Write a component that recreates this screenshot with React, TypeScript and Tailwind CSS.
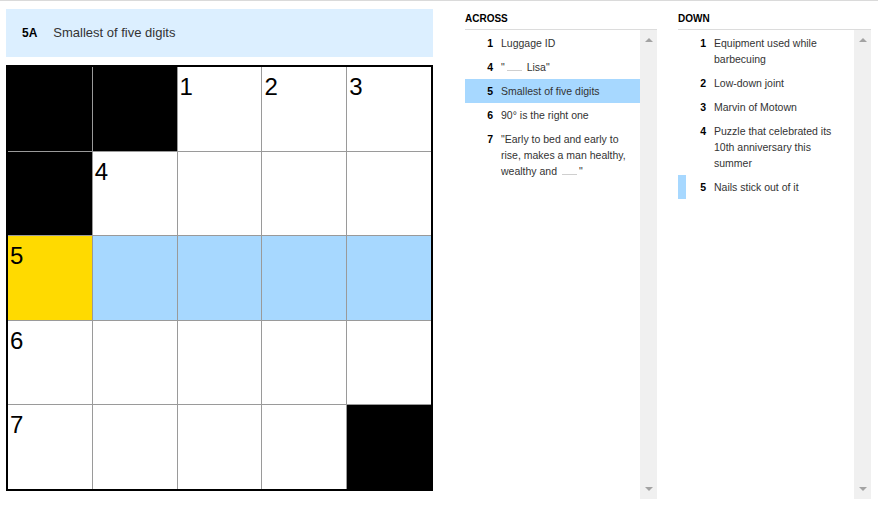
import React from "react";

type Cell = { black?: boolean; num?: number };

const grid: Cell[] = [
	{ black: true }, { black: true }, { num: 1 }, { num: 2 }, { num: 3 },
	{ black: true }, { num: 4 }, {}, {}, {},
	{ num: 5 }, {}, {}, {}, {},
	{ num: 6 }, {}, {}, {}, {},
	{ num: 7 }, {}, {}, {}, { black: true },
];

const Blank = () => (
	<span className="inline-block w-[15px] h-px bg-[#cfcfcf] mx-[2px]" />
);

const across: { n: number; text: React.ReactNode; active?: boolean }[] = [
	{ n: 1, text: "Luggage ID" },
	{ n: 4, text: <>"<Blank /> Lisa"</> },
	{ n: 5, text: "Smallest of five digits", active: true },
	{ n: 6, text: "90° is the right one" },
	{ n: 7, text: <>"Early to bed and early to rise, makes a man healthy, wealthy and <Blank />"</> },
];

const down: { n: number; text: React.ReactNode; related?: boolean }[] = [
	{ n: 1, text: "Equipment used while barbecuing" },
	{ n: 2, text: "Low-down joint" },
	{ n: 3, text: "Marvin of Motown" },
	{ n: 4, text: "Puzzle that celebrated its 10th anniversary this summer" },
	{ n: 5, text: "Nails stick out of it", related: true },
];

const Scrollbar = () => (
	<div className="w-[17px] bg-[#f0f0f0] flex flex-col items-center justify-between pt-[8px] pb-[8px]">
		<div className="w-0 h-0 border-l-[4px] border-r-[4px] border-b-[4px] border-l-transparent border-r-transparent border-b-[#a3a3a3]" />
		<div className="w-0 h-0 border-l-[4px] border-r-[4px] border-t-[4px] border-l-transparent border-r-transparent border-t-[#a3a3a3]" />
	</div>
);

const ClueList = ({
	title,
	items,
}: {
	title: string;
	items: { n: number; text: React.ReactNode; active?: boolean; related?: boolean }[];
}) => {
	return (
		<div className="flex flex-col">
			<div className="h-[29px] pt-[12px] text-[10px] leading-[12px] font-bold text-black border-b border-[#dcdcdc]">
				{title}
			</div>
			<div className="flex h-[469px]">
				<div className="flex-1 pt-[1px]">
					{items.map((c) => (
						<div
							key={c.n}
							className={`flex py-[4px] pr-[10px] border-l-[8px] text-[10.5px] leading-[16px] ${
								c.active ? "bg-[#a7d8ff] border-l-transparent" : c.related ? "border-l-[#a7d8ff]" : "border-l-transparent"
							}`}
						>
							<span className="w-[20px] shrink-0 text-right font-bold text-black">{c.n}</span>
							<span className="ml-[8px] text-[#333]">{c.text}</span>
						</div>
					))}
				</div>
				<Scrollbar />
			</div>
		</div>
	);
};

const App = () => {
	return (
		<div className="w-[878px] h-[505px] bg-white border-t border-[#dadada] flex overflow-hidden font-['Liberation_Sans',Arial,sans-serif]">
			<div className="ml-[6px] mt-[8px] w-[427px] flex flex-col">
				<div className="h-[48px] bg-[#dcefff] flex items-center pl-[16px]">
					<span className="text-[12px] font-bold text-black">5A</span>
					<span className="ml-[16px] text-[13px] text-[#333]">Smallest of five digits</span>
				</div>
				<div className="mt-[8px] w-[427px] h-[426px] border-2 border-black bg-[#9a9a9a] grid grid-cols-5 grid-rows-5 gap-px">
					{grid.map((cell, i) => {
						const row = Math.floor(i / 5);
						let bg = "bg-white";
						if (cell.black) bg = "bg-black";
						else if (i === 10) bg = "bg-[#ffda00]";
						else if (row === 2) bg = "bg-[#a7d8ff]";
						return (
							<div key={i} className={`${bg} pl-[2px] pt-[8px]`}>
								{cell.num && <span className="block text-[24px] leading-none text-black">{cell.num}</span>}
							</div>
						);
					})}
				</div>
			</div>
			<div className="ml-[32px] w-[192px]">
				<ClueList title="ACROSS" items={across} />
			</div>
			<div className="ml-[21px] w-[193px]">
				<ClueList title="DOWN" items={down} />
			</div>
		</div>
	);
};

export default App;
